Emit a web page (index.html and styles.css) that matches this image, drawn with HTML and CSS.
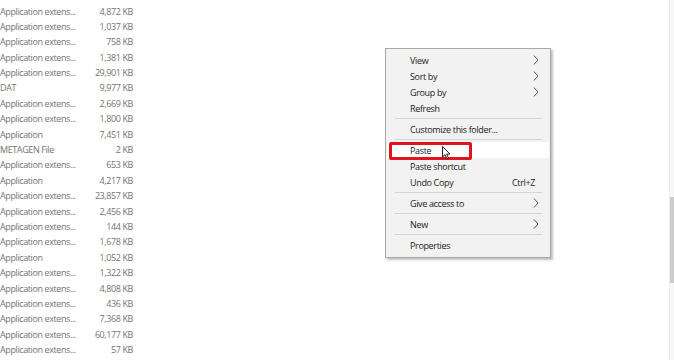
FILE: index.html
```html
<!DOCTYPE html>
<html>
  <head>
    <meta charset="utf-8">
    <title>Explorer context menu</title>
    <link rel="stylesheet" href="styles.css">
  </head>
  <body>
    <div class="files">
      <div class="row"><span class="type">Application extens...</span><span class="size">4,872 KB</span></div>
      <div class="row"><span class="type">Application extens...</span><span class="size">1,037 KB</span></div>
      <div class="row"><span class="type">Application extens...</span><span class="size">758 KB</span></div>
      <div class="row"><span class="type">Application extens...</span><span class="size">1,381 KB</span></div>
      <div class="row"><span class="type">Application extens...</span><span class="size">29,901 KB</span></div>
      <div class="row"><span class="type">DAT</span><span class="size">9,977 KB</span></div>
      <div class="row"><span class="type">Application extens...</span><span class="size">2,669 KB</span></div>
      <div class="row"><span class="type">Application extens...</span><span class="size">1,800 KB</span></div>
      <div class="row"><span class="type">Application</span><span class="size">7,451 KB</span></div>
      <div class="row"><span class="type">METAGEN File</span><span class="size">2 KB</span></div>
      <div class="row"><span class="type">Application extens...</span><span class="size">653 KB</span></div>
      <div class="row"><span class="type">Application</span><span class="size">4,217 KB</span></div>
      <div class="row"><span class="type">Application extens...</span><span class="size">23,857 KB</span></div>
      <div class="row"><span class="type">Application extens...</span><span class="size">2,456 KB</span></div>
      <div class="row"><span class="type">Application extens...</span><span class="size">144 KB</span></div>
      <div class="row"><span class="type">Application extens...</span><span class="size">1,678 KB</span></div>
      <div class="row"><span class="type">Application</span><span class="size">1,052 KB</span></div>
      <div class="row"><span class="type">Application extens...</span><span class="size">1,322 KB</span></div>
      <div class="row"><span class="type">Application extens...</span><span class="size">4,808 KB</span></div>
      <div class="row"><span class="type">Application extens...</span><span class="size">436 KB</span></div>
      <div class="row"><span class="type">Application extens...</span><span class="size">7,368 KB</span></div>
      <div class="row"><span class="type">Application extens...</span><span class="size">60,177 KB</span></div>
      <div class="row"><span class="type">Application extens...</span><span class="size">57 KB</span></div>
    </div>

    <div class="menu">
      <div class="item"><span>View</span><svg class="chev" width="6" height="10" viewBox="0 0 6 10"><path d="M1 0.5 L5 5 L1 9.5"/></svg></div>
      <div class="item"><span>Sort by</span><svg class="chev" width="6" height="10" viewBox="0 0 6 10"><path d="M1 0.5 L5 5 L1 9.5"/></svg></div>
      <div class="item"><span>Group by</span><svg class="chev" width="6" height="10" viewBox="0 0 6 10"><path d="M1 0.5 L5 5 L1 9.5"/></svg></div>
      <div class="item"><span>Refresh</span></div>
      <div class="sep"></div>
      <div class="item"><span>Customize this folder...</span></div>
      <div class="sep"></div>
      <div class="item hover"><span>Paste</span></div>
      <div class="item"><span>Paste shortcut</span></div>
      <div class="item"><span>Undo Copy</span><span class="key">Ctrl+Z</span></div>
      <div class="sep"></div>
      <div class="item"><span>Give access to</span><svg class="chev" width="6" height="10" viewBox="0 0 6 10"><path d="M1 0.5 L5 5 L1 9.5"/></svg></div>
      <div class="sep"></div>
      <div class="item"><span>New</span><svg class="chev" width="6" height="10" viewBox="0 0 6 10"><path d="M1 0.5 L5 5 L1 9.5"/></svg></div>
      <div class="sep"></div>
      <div class="item"><span>Properties</span></div>
    </div>

    <div class="mark"></div>
    <svg class="cursor" width="9" height="14" viewBox="0 0 9 14"><path d="M0.5 0.5 L0.5 11 L3 8.6 L4.8 12.8 L6.4 12.1 L4.7 8.1 L8 8.1 Z"/></svg>

    <div class="scrollbar"><div class="thumb"></div></div>
  </body>
</html>
```

FILE: styles.css
```css
* { box-sizing: border-box; }
body {
  margin: 0;
  background: #fff;
  font-family: "Open Sans", "Noto Sans", sans-serif;
  font-size: 9px;
  overflow: hidden;
}
.files {
  width: 133px;
  padding-top: 3.5px;
  color: #737373;
}
.row {
  display: flex;
  height: 15.4px;
  line-height: 15.4px;
  white-space: nowrap;
  letter-spacing: -0.4px;
}
.type { width: 90px; }
.size { flex: 1; text-align: right; }

.menu {
  position: absolute;
  left: 385px;
  top: 48px;
  width: 166px;
  height: 210px;
  padding: 3px 1px 5px;
  background: #f2f2f2;
  border: 1px solid #a8a8a8;
  box-shadow: 2px 2px 2px rgba(0, 0, 0, .25);
  color: #1b1b1b;
  letter-spacing: -0.35px;
}
.item {
  display: flex;
  align-items: center;
  height: 16px;
  padding: 0 10px 0 23px;
  white-space: nowrap;
}
.item span:first-child { flex: 1; }
.item.hover { background: #fff; }
.key { margin-right: 4px; }
.chev {
  fill: none;
  stroke: #555;
  stroke-width: 1;
}
.sep {
  height: 1px;
  margin: 2px 7px 2px 8px;
  background: #d4d4d4;
}

.mark {
  position: absolute;
  left: 389px;
  top: 142px;
  width: 83px;
  height: 18px;
  border: 3px solid #e0141e;
  border-radius: 2px;
}
.cursor {
  position: absolute;
  left: 442px;
  top: 146px;
  fill: #fff;
  stroke: #222;
  stroke-width: 1;
}

.scrollbar {
  position: absolute;
  top: 0;
  right: 0;
  width: 5px;
  height: 100%;
  background: #f7f7f7;
  border-left: 1px solid #ececec;
}
.thumb {
  margin-top: 197px;
  height: 86px;
  background: #cdcdcd;
}
```
